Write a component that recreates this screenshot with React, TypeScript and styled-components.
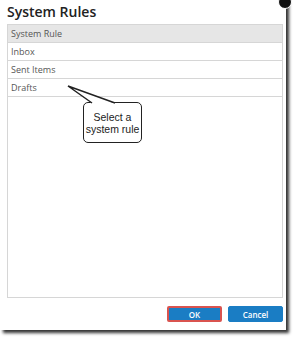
import styled, { createGlobalStyle } from "styled-components";

const Global = createGlobalStyle`
  body {
    margin: 0;
    background: #ffffff;
    font-family: "Open Sans", "Liberation Sans", sans-serif;
  }
`;

const Page = styled.div`
  width: 299px;
  height: 343px;
  position: relative;
  overflow: hidden;
  background: #ffffff;
`;

const Dialog = styled.div`
  position: relative;
  width: 286px;
  height: 330px;
  background: #ffffff;
  box-shadow: 3px 3px 3px rgba(0, 0, 0, 0.8);
  display: flex;
  flex-direction: column;
  padding: 3px 3px 7px 7px;
  box-sizing: border-box;
`;

const Close = styled.div`
  position: absolute;
  top: -5px;
  right: -6px;
  width: 12px;
  height: 12px;
  border-radius: 50%;
  background: #111;
  border: 1px solid #fff;
`;

const Title = styled.h1`
  margin: 0 0 3px 0;
  font-size: 14px;
  font-weight: 600;
  color: #222;
  line-height: 18px;
`;

const List = styled.div`
  position: relative;
  flex: 1;
  border: 1px solid #d6d6d6;
  display: flex;
  flex-direction: column;
`;

const Row = styled.div<{ $head?: boolean }>`
  height: 17px;
  line-height: 17px;
  padding-left: 3px;
  font-size: 9px;
  color: #555;
  background: ${(p) => (p.$head ? "#e6e6e6" : "#ffffff")};
  border-bottom: 1px solid #d6d6d6;
`;

const Callout = styled.div`
  position: absolute;
  left: 75px;
  top: 77px;
  width: 59px;
  height: 41px;
  border: 1.5px solid #222;
  border-radius: 5px;
  background: #fff;
  box-sizing: border-box;
  display: flex;
  align-items: center;
  justify-content: center;
  text-align: center;
  font-family: "Liberation Sans", Arial, sans-serif;
  font-size: 10.5px;
  line-height: 12px;
  color: #222;
`;

const Tail = styled.svg`
  position: absolute;
  left: 59px;
  top: 60px;
  overflow: visible;
  z-index: 1;
`;

const Footer = styled.div`
  display: flex;
  justify-content: flex-end;
  gap: 6px;
  padding-top: 8px;
  height: 17px;
`;

const Button = styled.button<{ $focused?: boolean }>`
  width: 55px;
  height: 16px;
  padding: 0;
  border-radius: 2px;
  background: #1a7dc4;
  color: #fff;
  font-family: "Open Sans", sans-serif;
  font-size: 8px;
  font-weight: 600;
  border: ${(p) => (p.$focused ? "2px solid #d9534f" : "1px solid #1a7dc4")};
`;

export default function App() {
  return (
    <Page>
      <Global />
      <Dialog>
        <Close />
        <Title>System Rules</Title>
        <List>
          <Row $head>System Rule</Row>
          <Row>Inbox</Row>
          <Row>Sent Items</Row>
          <Row>Drafts</Row>
          <Callout>
            Select a
            <br />
            system rule
          </Callout>
          <Tail width="50" height="20">
            <polygon points="1,1 25,18.5 48,18.5" fill="#fff" />
            <path d="M25 18 L1 1 L48 18" stroke="#222" strokeWidth="1.5" fill="none" />
          </Tail>
        </List>
        <Footer>
          <Button $focused>OK</Button>
          <Button>Cancel</Button>
        </Footer>
      </Dialog>
    </Page>
  );
}
